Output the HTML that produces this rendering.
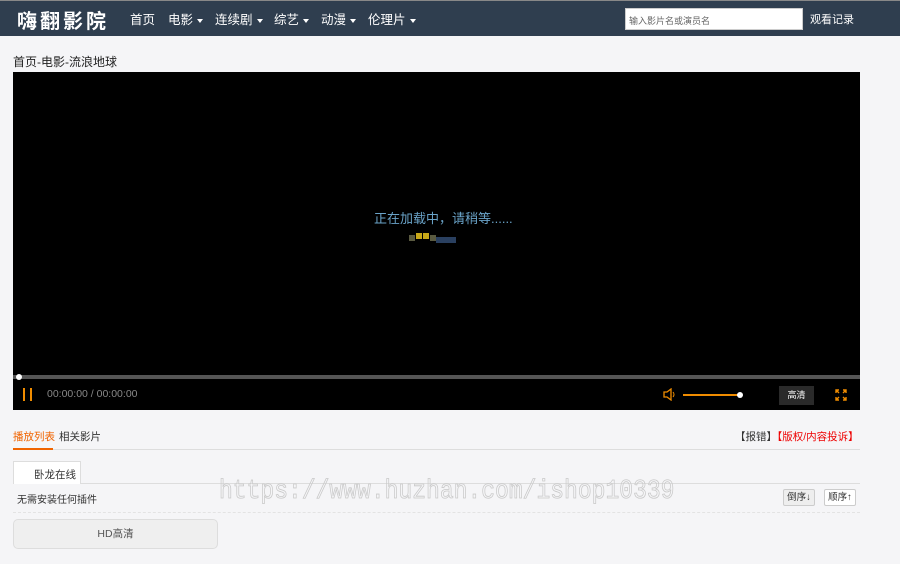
<!DOCTYPE html>
<html><head><meta charset="utf-8"><style>
*{margin:0;padding:0;box-sizing:border-box}
body{width:900px;height:564px;background:#f5f5f7;font-family:"Liberation Sans","Noto Sans CJK SC",sans-serif;font-size:12px;color:#333;position:relative;overflow:hidden}
.top{position:absolute;left:0;top:0;width:900px;height:36px;background:#2f3e4f;border-top:1px solid #888}
.logo{position:absolute;left:17px;top:4px;color:#fff;font-size:20px;font-weight:bold;letter-spacing:3px}
.nav{position:absolute;top:8px;color:#fff;font-size:12.5px}
.caret{display:inline-block;border-top:4px solid #fff;border-left:3px solid transparent;border-right:3px solid transparent;vertical-align:middle;margin-left:4px}
.search{position:absolute;left:625px;top:7px;width:178px;height:22px;background:#fff;border:1px solid #ccc;font-size:9px;color:#666;padding:5px 3px}
.hist{position:absolute;left:810px;top:10px;color:#fff;font-size:11px}
.bc{position:absolute;left:13px;top:53px;font-size:12px;color:#222}
.player{position:absolute;left:13px;top:72px;width:847px;height:338px;background:#000}
.a{position:absolute}
</style></head><body>
<div class="top">
<div class="logo">嗨翻影院</div>
<span class="nav" style="left:130px">首页</span>
<span class="nav" style="left:168px">电影<i class="caret"></i></span>
<span class="nav" style="left:215px">连续剧<i class="caret"></i></span>
<span class="nav" style="left:274px">综艺<i class="caret"></i></span>
<span class="nav" style="left:321px">动漫<i class="caret"></i></span>
<span class="nav" style="left:368px">伦理片<i class="caret"></i></span>
<div class="search">输入影片名或演员名</div>
<div class="hist">观看记录</div>
</div>
<div class="bc">首页-电影-流浪地球</div>
<div class="player">
<div class="a" style="left:361px;top:136px;color:#6aa3c8;font-size:13px">正在加载中，请稍等......</div>
<div class="a" style="left:396px;top:163px;width:6px;height:6px;background:#5a5a40"></div>
<div class="a" style="left:403px;top:161px;width:6px;height:6px;background:#c8a818"></div>
<div class="a" style="left:410px;top:161px;width:6px;height:6px;background:#c8a818"></div>
<div class="a" style="left:417px;top:163px;width:6px;height:6px;background:#5a5a40"></div>
<div class="a" style="left:423px;top:165px;width:20px;height:6px;background:#2a4060"></div>
<div class="a" style="left:0;top:303px;width:847px;height:4px;background:#555"></div>
<div class="a" style="left:3px;top:302px;width:6px;height:6px;border-radius:3px;background:#fff"></div>
<div class="a" style="left:10px;top:316px;width:2px;height:13px;background:#f08c00"></div>
<div class="a" style="left:17px;top:316px;width:2px;height:13px;background:#f08c00"></div>
<div class="a" style="left:34px;top:316px;color:#888;font-size:10.5px">00:00:00 / 00:00:00</div>
<svg class="a" style="left:650px;top:316px" width="14" height="13" viewBox="0 0 14 13"><path d="M1 4h3l4-3v11l-4-3H1z" fill="none" stroke="#f08c00" stroke-width="1.3"/><path d="M10 4q2 2.5 0 5" fill="none" stroke="#f08c00"/></svg>
<div class="a" style="left:670px;top:322px;width:57px;height:2px;background:#f08c00"></div>
<div class="a" style="left:724px;top:320px;width:6px;height:6px;border-radius:3px;background:#fff"></div>
<div class="a" style="left:766px;top:314px;width:35px;height:19px;background:#2a2a2a;color:#fff;font-size:9px;text-align:center;line-height:19px">高清</div>
<svg class="a" style="left:822px;top:317px" width="12" height="12" viewBox="0 0 12 12" fill="none" stroke="#f08c00" stroke-width="1.4"><path d="M1 4V1h3M8 1h3v3M11 8v3H8M4 11H1V8M1 1l3 3M11 1L8 4M11 11L8 8M1 11l3-3"/></svg>
</div>
<div class="a" style="left:13px;top:429px;color:#f06400;font-size:10.5px">播放列表</div>
<div class="a" style="left:59px;top:429px;color:#333;font-size:10.5px">相关影片</div>
<div class="a" style="left:735px;top:429px;font-size:10.5px;color:#333">【报错】<span style="color:#e00">【版权/内容投诉】</span></div>
<div class="a" style="left:13px;top:449px;width:847px;height:1px;background:#ddd"></div>
<div class="a" style="left:13px;top:448px;width:40px;height:2px;background:#f06400"></div>
<div class="a" style="left:13px;top:483px;width:847px;height:1px;background:#ddd"></div>
<div class="a" style="left:13px;top:461px;width:68px;height:23px;background:#fff;border:1px solid #ddd;border-bottom:none;color:#333;font-size:10.5px;padding:5px 0 0 20px">卧龙在线</div>
<div class="a" style="left:17px;top:491px;color:#333;font-size:10px">无需安装任何插件</div>
<div class="a" style="left:783px;top:489px;width:32px;height:17px;border:1px solid #ccc;border-radius:2px;background:#eee;font-size:9.5px;text-align:center;line-height:15px">倒序↓</div>
<div class="a" style="left:824px;top:489px;width:32px;height:17px;border:1px solid #ccc;border-radius:2px;background:#fff;font-size:9.5px;text-align:center;line-height:15px">顺序↑</div>
<div class="a" style="left:13px;top:512px;width:847px;border-top:1px dashed #e3e3e3"></div>
<div class="a" style="left:13px;top:519px;width:205px;height:30px;border:1px solid #ddd;border-radius:5px;background:#efefef;color:#555;font-size:10.5px;text-align:center;line-height:28px">HD高清</div>
<div class="a" style="left:219px;top:475px;font-family:'Liberation Mono',monospace;font-size:23px;line-height:28px;color:transparent;-webkit-text-stroke:0.7px #c8c8c8;transform:scaleY(1.15);transform-origin:top left">https://www.huzhan.com/ishop10339</div>
</body></html>
